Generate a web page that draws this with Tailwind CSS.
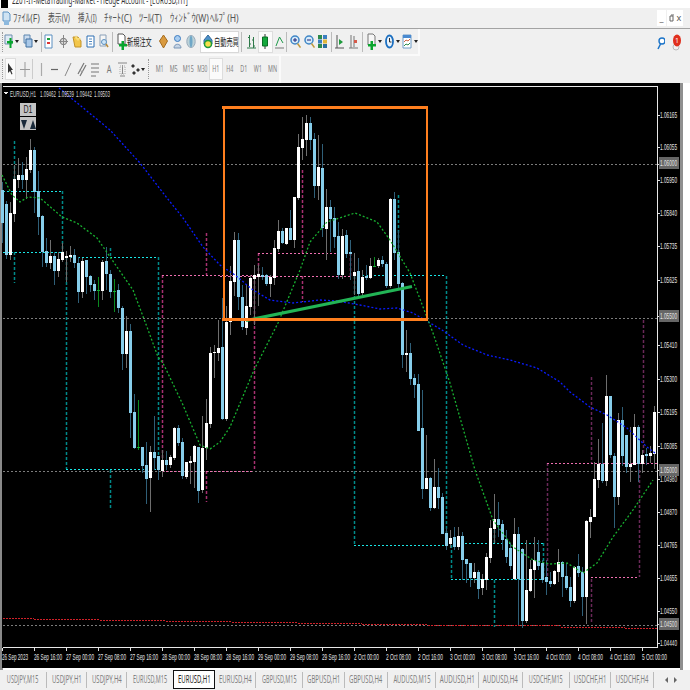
<!DOCTYPE html>
<html lang="ja">
<head>
<meta charset="utf-8">
<title>MetaTrader EURUSD,H1</title>
<script src="https://cdn.jsdelivr.net/npm/@tailwindcss/browser@4"></script>
</head>
<body class="bg-white">
<div class="w-[690px] h-[690px] overflow-hidden flex flex-col bg-[#f0f0f0] font-['Noto_Sans','Noto_Sans_CJK_JP',sans-serif] text-[#444]">

  <!-- title bar, cut off at the top -->
  <div class="h-[8px] bg-white overflow-hidden flex items-start gap-[4px] pl-[1px] shrink-0">
    <div class="w-[7px] h-[8px] bg-black shrink-0"></div>
    <div class="origin-left scale-x-[.62] text-[10px] leading-[10px] text-[#333] whitespace-nowrap -mt-[5px]">2201-IT-MetaTrading-Market - Hedge Account - [EURUSD,H1]</div>
  </div>

  <!-- menu -->
  <div class="h-[21px] border-b border-[#a3a3a3] flex items-center shrink-0 relative">
    <svg class="ml-[2px]" width="9" height="15" viewBox="0 0 9 15"><path d="M1 1h5l2 2v7H1z" fill="#cfe3f3" stroke="#5c93c4"/><path d="M2 10h5v4H2z" fill="#8db9de"/></svg>
    <div class="ml-[2px] flex text-[11px] leading-[20px] whitespace-nowrap text-[#555]">
      <div class="w-[35px]"><div class="origin-left scale-x-[.78] w-max">ﾌｧｲﾙ(F)</div></div>
      <div class="w-[30px]"><div class="origin-left scale-x-[.62] w-max">表示(V)</div></div>
      <div class="w-[26px]"><div class="origin-left scale-x-[.58] w-max">挿入(I)</div></div>
      <div class="w-[35px]"><div class="origin-left scale-x-[.78] w-max">ﾁｬｰﾄ(C)</div></div>
      <div class="w-[31px]"><div class="origin-left scale-x-[.78] w-max">ﾂｰﾙ(T)</div></div>
      <div class="w-[40px]"><div class="origin-left scale-x-[.78] w-max">ｳｨﾝﾄﾞｳ(W)</div></div>
      <div class="w-[30px]"><div class="origin-left scale-x-[.78] w-max">ﾍﾙﾌﾟ(H)</div></div>
    </div>
    <div class="ml-auto mr-[7px] flex h-[16px] items-stretch text-[#555] text-[9px] leading-[15px]">
      <div class="w-[9px] bg-white text-center mr-[1px]">_</div>
      <div class="w-[8px] bg-white flex items-center justify-center"><svg width="5" height="8" viewBox="0 0 5 8"><path d="M1 2h3v5H1zM2 1h3" fill="none" stroke="#666"/></svg></div>
      <div class="w-[8px] bg-white text-center">x</div>
    </div>
  </div>

  <!-- toolbar 1 -->
  <div class="h-[27px] flex shrink-0 relative">
    <div class="w-[420px] h-[27px] flex items-center border-b-2 border-r-2 border-[#fafafa]">
      <div class="ml-[2px] w-[1px] h-[20px] border-l border-dotted border-[#999]"></div>
      <div class="ml-[1px] w-[10px] flex justify-center"><svg width="9" height="15" viewBox="0 0 9 15"><path d="M1 1h7v9H1z" fill="#dfeaf5" stroke="#6f8fb0"/><path d="M3 7h2.500v-3h2v3H9v2.500H7.500V14h-2V9.500H3z" fill="#0aa52e"/></svg></div>
      <div class="w-[6px] flex justify-center"><div class="border-x-[2px] border-t-[3px] border-x-transparent border-t-[#222]"></div></div>
      <div class="ml-[3px] w-[10px] flex justify-center"><svg width="10" height="15" viewBox="0 0 10 15"><path d="M1 1h6v8H1z" fill="#cbdcef" stroke="#5d86b0"/><path d="M3 5h6v8H3z" fill="#a9c8e8" stroke="#3e6f9f"/></svg></div>
      <div class="w-[6px] flex justify-center"><div class="border-x-[2px] border-t-[3px] border-x-transparent border-t-[#222]"></div></div>
      <div class="ml-[2px] w-[1px] h-[20px] bg-[#bbb]"></div>
      <div class="w-[15px] flex justify-center"><svg width="9" height="15" viewBox="0 0 9 15"><path d="M1 1h7v13H1z" fill="#fff" stroke="#5a8fc0"/><path d="M3 4h3v2H3z" fill="#1b9e3c"/><path d="M3 8h3v2H3z" fill="#d33"/></svg></div>
      <div class="w-[14px] flex justify-center"><svg width="9" height="15" viewBox="0 0 9 15"><circle cx="4.500" cy="7.500" r="3.200" fill="#ddd" stroke="#777"/><path d="M4.500 1v13M0 7.500h9" stroke="#888"/></svg></div>
      <div class="w-[14px] flex justify-center"><svg width="10" height="15" viewBox="0 0 10 15"><path d="M1 3h5l3 4v6H3z" fill="#f3c64a" stroke="#c2932a"/><path d="M4 1l1.500 3H9L6 7 3 4z" fill="#f8dd78"/></svg></div>
      <div class="w-[14px] flex justify-center"><svg width="9" height="15" viewBox="0 0 9 15"><path d="M1 2h7v11H1z" fill="#fff" stroke="#2d6fb3"/><path d="M3 5h3M3 7.500h3M3 10h3" stroke="#4f87c0"/></svg></div>
      <div class="w-[14px] flex justify-center"><svg width="10" height="15" viewBox="0 0 10 15"><path d="M1 1h6v11H1z" fill="#f6f6f6" stroke="#8aa0b8"/><circle cx="5" cy="8" r="2.500" fill="#cfe6f7" stroke="#5a8fc0"/><path d="M7 10l2 3" stroke="#b98a3a" stroke-width="1.500"/></svg></div>
      <div class="ml-[1px] w-[1px] h-[20px] bg-[#bbb]"></div>
      <div class="ml-[3px] w-[11px] flex justify-center"><svg width="10" height="18" viewBox="0 0 10 18"><path d="M1 1h5l2 2v8H1z" fill="#fff" stroke="#555"/><path d="M2 11h2.500V8h2.500v3H10v2.500H7V17H4.500v-3.500H2z" fill="#0aa52e"/></svg></div>
      <div class="w-[30px] text-[10px] leading-[20px] text-[#222] whitespace-nowrap"><div class="origin-left scale-x-[.62] w-max">新規注文</div></div>
      <div class="w-[14px] flex justify-center"><svg width="9" height="15" viewBox="0 0 9 15"><path d="M4.500 1l4 6-4 7-4-7z" fill="#d99a3f" stroke="#a56c20"/></svg></div>
      <div class="w-[14px] flex justify-center"><svg width="9" height="15" viewBox="0 0 9 15"><circle cx="4.500" cy="4.500" r="3" fill="#a9cdf0" stroke="#3d7cc0"/><path d="M1 14c0-5 7-5 7 0z" fill="#c6d5e6" stroke="#7a95b5"/></svg></div>
      <div class="w-[14px] flex justify-center"><svg width="10" height="15" viewBox="0 0 10 15"><ellipse cx="5" cy="7.500" rx="4.200" ry="6" fill="#bcd2d8" stroke="#9ab"/><ellipse cx="5" cy="7.500" rx="1.500" ry="6" fill="#6fa7c7"/></svg></div>
      <div class="ml-[2px] w-[39px] h-[22px] bg-white border border-[#d8d8d8] flex items-center pl-[2px]">
        <svg class="shrink-0" width="10" height="15" viewBox="0 0 10 15"><path d="M1 6l4-5 4 5v4H1z" fill="#4e8fc9" stroke="#326a9a"/><circle cx="5" cy="10" r="3.500" fill="#f6e04a" stroke="#1c9a3a" stroke-width="1.500"/></svg>
        <div class="ml-[1px] w-[24px] text-[10px] leading-[20px] text-[#222] whitespace-nowrap"><div class="origin-left scale-x-[.62] w-max">自動売買</div></div>
      </div>
      <div class="ml-[2px] w-[1px] h-[20px] bg-[#bbb]"></div>
      <div class="ml-[2px] w-[14px] flex justify-center"><svg width="9" height="15" viewBox="0 0 9 15"><path d="M2.500 1v12M6.500 3v11M1 3.500h1.500M2.500 10H4M5 6h1.500M6.500 12H8M0 14h9" stroke="#2f7a4a" fill="none"/></svg></div>
      <div class="w-[15px] h-[22px] bg-[#fbfbfb] border border-[#ddd] flex items-center justify-center"><svg width="8" height="15" viewBox="0 0 8 15"><path d="M4 0v15" stroke="#333"/><path d="M1.500 3h5v9h-5z" fill="#14a83c" stroke="#0b6e26"/></svg></div>
      <div class="w-[13px] flex justify-center"><svg width="9" height="15" viewBox="0 0 9 15"><path d="M1 12l3.500-9L8 9" fill="none" stroke="#1e9a4a"/><path d="M0 14h9" stroke="#777"/></svg></div>
      <div class="ml-[1px] w-[1px] h-[20px] bg-[#bbb]"></div>
      <div class="ml-[1px] w-[14px] flex justify-center"><svg width="11" height="15" viewBox="0 0 11 15"><circle cx="5" cy="6" r="4" fill="#d6ebfa" stroke="#3f86c6" stroke-width="1.500"/><path d="M3 6h4M5 4v4" stroke="#227"/><path d="M7.500 9.500l3 4" stroke="#c29a3f" stroke-width="1.500"/></svg></div>
      <div class="w-[14px] flex justify-center"><svg width="11" height="15" viewBox="0 0 11 15"><circle cx="5" cy="6" r="4" fill="#d6ebfa" stroke="#3f86c6" stroke-width="1.500"/><path d="M3 6h4" stroke="#227"/><path d="M7.500 9.500l3 4" stroke="#c29a3f" stroke-width="1.500"/></svg></div>
      <div class="w-[14px] flex justify-center"><svg width="9" height="15" viewBox="0 0 9 15"><path d="M0 1h4v4H0zM0 10h4v4H0z" fill="#2c8a4a"/><path d="M5 1h4v4H5zM0 5.500h4v4H0z" fill="#3b7fc0"/><path d="M5 5.500h4v4H5z" fill="#e0b83a"/><path d="M5 10h4v4H5z" fill="#2c6f9f"/></svg></div>
      <div class="ml-[1px] w-[1px] h-[20px] bg-[#bbb]"></div>
      <div class="ml-[1px] w-[14px] flex justify-center"><svg width="9" height="15" viewBox="0 0 9 15"><path d="M2 1v13M0 14h9" stroke="#555"/><path d="M4 5v6l4-3z" fill="#1f9a3c"/></svg></div>
      <div class="w-[15px] flex justify-center"><svg width="9" height="15" viewBox="0 0 9 15"><path d="M2 1v13M5 2v11M0 14h9" stroke="#777"/><path d="M5 6h3v3H5z" fill="#d65a4a"/></svg></div>
      <div class="ml-[1px] w-[1px] h-[20px] bg-[#bbb]"></div>
      <div class="ml-[3px] w-[12px] flex justify-center"><svg width="9" height="18" viewBox="0 0 9 18"><path d="M1 1h5l2 2v9H1z" fill="#f6f6f6" stroke="#777"/><path d="M1 11h2.500V8H6v3h3v2.500H6V17H3.500v-3.500H1z" fill="#0aa52e"/></svg></div>
      <div class="w-[5px] flex justify-center"><div class="border-x-[2px] border-t-[3px] border-x-transparent border-t-[#222]"></div></div>
      <div class="ml-[1px] w-[12px] flex justify-center"><svg width="9" height="15" viewBox="0 0 9 15"><ellipse cx="4.500" cy="7.500" rx="3.500" ry="6" fill="#eaf3fb" stroke="#1c6fc0" stroke-width="1.800"/><path d="M4.500 4v4h2" stroke="#333" fill="none"/></svg></div>
      <div class="w-[5px] flex justify-center"><div class="border-x-[2px] border-t-[3px] border-x-transparent border-t-[#222]"></div></div>
      <div class="ml-[1px] w-[12px] flex justify-center"><svg width="10" height="15" viewBox="0 0 10 15"><path d="M1 1h8v13H1z" fill="#fff" stroke="#6f9cc8"/><path d="M1 1h8v3H1z" fill="#4a8ad0"/><path d="M2 8l2-2 2 1 2-2" stroke="#c64" fill="none"/><path d="M2 12l2-2 2 1 2-2" stroke="#2a8a4a" fill="none"/></svg></div>
      <div class="w-[5px] flex justify-center"><div class="border-x-[2px] border-t-[3px] border-x-transparent border-t-[#222]"></div></div>
    </div>
    <div class="ml-auto mr-[9px] flex items-center gap-[7px] h-[27px] relative">
      <svg width="8" height="14" viewBox="0 0 8 14"><circle cx="5" cy="5" r="3" fill="#fff" stroke="#1c74c8" stroke-width="1.400"/><path d="M3.500 8L1 13" stroke="#1c74c8" stroke-width="1.600"/></svg>
      <svg width="9" height="18" viewBox="0 0 9 18"><circle cx="4" cy="13" r="3" fill="#f2f2f2" stroke="#bbb"/><ellipse cx="5" cy="6.500" rx="4" ry="6" fill="#e0301e"/><text x="5" y="9" font-size="7" fill="#fff" text-anchor="middle">1</text></svg>
    </div>
  </div>

  <!-- toolbar 2 -->
  <div class="h-[27px] shrink-0 flex">
    <div class="w-[281px] h-[27px] flex items-center border-r-2 border-b border-[#fafafa]">
      <div class="ml-[2px] w-[1px] h-[20px] border-l border-dotted border-[#999]"></div>
      <div class="ml-[2px] w-[11px] h-[22px] bg-[#fbfbfb] border border-[#ddd] flex items-center justify-center"><svg width="7" height="14" viewBox="0 0 7 14"><path d="M1 1l5 7H4l1.500 4-1 .5L3 9 1 11z" fill="#333"/></svg></div>
      <div class="ml-[2px] w-[14px] flex justify-center"><svg width="10" height="15" viewBox="0 0 10 15"><path d="M5 0v15M0 7.500h10" stroke="#999"/></svg></div>
      <div class="w-[1px] h-[20px] bg-[#ccc] ml-[1px]"></div>
      <div class="ml-[1px] w-[14px] flex justify-center"><svg width="3" height="13" viewBox="0 0 3 13"><path d="M1.500 0v13" stroke="#aaa" stroke-width="1.200"/></svg></div>
      <div class="w-[14px] flex justify-center"><svg width="7" height="3" viewBox="0 0 7 3"><path d="M0 1.500h7" stroke="#666" stroke-width="1.200"/></svg></div>
      <div class="w-[14px] flex justify-center"><svg width="8" height="13" viewBox="0 0 8 13"><path d="M1 13L7 0" stroke="#888"/></svg></div>
      <div class="w-[14px] flex justify-center"><svg width="10" height="15" viewBox="0 0 10 15"><path d="M1 12L7 1M3 14L9 3" stroke="#777" stroke-width="1.200"/><path d="M2 8l4 2" stroke="#999"/></svg></div>
      <div class="w-[14px] flex justify-center"><svg width="9" height="15" viewBox="0 0 9 15"><path d="M0 2h8M0 6h8M0 10h8M0 14h5" stroke="#777" fill="none"/></svg></div>
      <div class="w-[14px] flex justify-center text-[10px] leading-[20px] text-[#777]"><span class="scale-x-[.75]">A</span></div>
      <div class="w-[14px] flex justify-center"><svg width="9" height="15" viewBox="0 0 9 15"><path d="M0 1h9M2 14h5M4.500 3v9" stroke="#888"/><path d="M2 4h5v8H2z" fill="none" stroke="#aaa" stroke-dasharray="1 1"/></svg></div>
      <div class="ml-[1px] w-[10px] flex justify-center"><svg width="9" height="13" viewBox="0 0 9 13"><path d="M2 1l2 2-2 2-2-2zM7 5l2 2-2 2-2-2zM3 8l2 2-2 2-2-2z" fill="#333"/></svg></div>
      <div class="w-[5px] flex justify-center"><div class="border-x-[2px] border-t-[3px] border-x-transparent border-t-[#222]"></div></div>
      <div class="ml-[3px] w-[1px] h-[20px] border-l border-dotted border-[#999]"></div>
      <div class="ml-[4px] flex items-center text-[9px] leading-[20px] text-[#808080]">
        <div class="w-[14px] flex justify-center"><span class="scale-x-[.6]">M1</span></div>
        <div class="w-[14px] flex justify-center"><span class="scale-x-[.6]">M5</span></div>
        <div class="w-[14px] flex justify-center"><span class="scale-x-[.6]">M15</span></div>
        <div class="w-[14px] flex justify-center"><span class="scale-x-[.55]">M30</span></div>
        <div class="w-[14px] h-[22px] flex justify-center bg-[#fbfbfb] border border-[#ddd]"><span class="scale-x-[.6]">H1</span></div>
        <div class="w-[14px] flex justify-center"><span class="scale-x-[.6]">H4</span></div>
        <div class="w-[14px] flex justify-center"><span class="scale-x-[.6]">D1</span></div>
        <div class="w-[14px] flex justify-center"><span class="scale-x-[.6]">W1</span></div>
        <div class="w-[14px] flex justify-center"><span class="scale-x-[.6]">MN</span></div>
      </div>
    </div>
  </div>

  <!-- chart -->
  <svg id="chart" class="block shrink-0 bg-white font-['Liberation_Sans',sans-serif]" width="690" height="587" viewBox="0 83 690 587" shape-rendering="crispEdges">
    <rect x="0" y="83" width="3" height="587" fill="#8a8a8a"/>
    <rect x="2" y="83" width="678" height="585" fill="#000"/>
    <rect x="680" y="83" width="3" height="587" fill="#8f8f8f"/>
    <path d="M2.500 86.500H657.500V647.500H2.500" fill="none" stroke="#e8e8e8"/>
    <g fill="none" stroke="#7c7c7c" stroke-dasharray="2 2">
      <path d="M3 164.500H657M3 318.500H657M3 471.500H657M3 625.500H657"/>
    </g>
    <g fill="none" stroke="#d02028" stroke-dasharray="2 1">
      <path d="M3 618.500H34M34 619.500H100M100 620.500H166M166 621.500H232M232 622.500H298M298 623.500H362M362 624.500H428M428 625.500H561M561 627.500H625M625 628.500H657"/>
    </g>
    <!-- cyan / teal D1 boxes -->
    <g fill="none" stroke="#008a8a" stroke-width="1.500" stroke-dasharray="3 2" shape-rendering="auto">
      <path d="M14.500 141V191M14.500 252V283M62.500 191V252M66.500 257V469M158.500 257V470M110.500 248V257M110.500 470V508M354.500 276V545M446.500 276V545M398.500 195V276M451.500 545V578M543.500 543V579M494.500 580V627M494.500 520V543"/>
    </g>
    <g fill="none" stroke="#19e6e6" stroke-dasharray="2 2">
      <path d="M3 191.500H62M3 252.500H62M66 257.500H158M66 469.500H158M354 275.500H446M354 545.500H446M465 543.500H543M451 579.500H543"/>
    </g>
    <!-- pink D1 boxes -->
    <g fill="none" stroke="#a83070" stroke-width="1.500" stroke-dasharray="3 2" shape-rendering="auto">
      <path d="M162.500 275V471M254.500 276V471M206.500 233V275M206.500 471V502M258.500 253V276M350.500 253V276M302.500 170V253M302.500 276V302"/>
    </g>
    <g fill="none" stroke="#6a2858" stroke-width="1.500" stroke-dasharray="3 2" shape-rendering="auto">
      <path d="M547.500 463V579M639.500 470V577M591.500 377V463M591.500 579V623M643.500 320V463"/>
    </g>
    <g fill="none" stroke="#ef6fb0" stroke-dasharray="2 2">
      <path d="M162 275.500H254M162 471.500H254M258 253.500H350M220 276.500H350M547 463.500H657M591 577.500H639"/>
    </g>
    <g id="candles"></g>
    <polyline fill="none" stroke="#0a1cff" stroke-width="1.300" stroke-dasharray="2 2" shape-rendering="auto" points="59,88 110,130 140,163 167,198 183,218 203,247 220,265 235,275 253,290 270,300 293,303 320,300 337,301 360,305 380,309 397,308 413,313 442,330 463,345 487,355 510,360 537,368 560,382 570,392 590,407 607,415 627,428 647,447 655,453"/>
    <polyline fill="none" stroke="#18b030" stroke-width="1.300" stroke-dasharray="2 2" shape-rendering="auto" points="2,175 7,185 12,195 20,202 28,197 40,198 62,217 77,223 97,238 117,267 133,290 147,327 158,357 163,363 183,405 200,445 210,449 220,442 230,427 254,370 278,323 300,270 310,242 327,222 355,213 377,222 390,240 410,273 433,333 450,383 475,470 493,520 513,547 533,560 550,564 567,563 583,573 597,563 613,537 633,510 653,480"/>
    <!-- drawn objects -->
    <path d="M246 320.500L412 286.500" stroke="#22b455" stroke-width="3" fill="none" shape-rendering="auto"/>
    <path d="M224 107.500H427V319.500H224Z" fill="none" stroke="#ff7f1e" stroke-width="2"/>
    <path d="M222 107.500H428M222 319.500H428" fill="none" stroke="#ff7f1e" stroke-width="3"/>
    <!-- info line -->
    <path d="M4 92h4l-2 3z" fill="#eee"/>
    <g fill="#d8d8d8" font-size="9">
      <text x="10" y="97" textLength="26" lengthAdjust="spacingAndGlyphs">EURUSD,H1</text>
      <text x="40" y="97" textLength="16" lengthAdjust="spacingAndGlyphs">1.09462</text>
      <text x="58" y="97" textLength="16" lengthAdjust="spacingAndGlyphs">1.09539</text>
      <text x="76" y="97" textLength="16" lengthAdjust="spacingAndGlyphs">1.09442</text>
      <text x="94" y="97" textLength="16" lengthAdjust="spacingAndGlyphs">1.09503</text>
    </g>
    <!-- D1 badge -->
    <rect x="20" y="103" width="16" height="13" fill="#c4c4c4"/>
    <rect x="20" y="117" width="16" height="13" fill="#c4c4c4"/>
    <text x="28" y="113" font-size="10" fill="#222" text-anchor="middle" textLength="9" lengthAdjust="spacingAndGlyphs">D1</text>
    <path d="M21 120h6l-3 9zM30 129l3-9 3 9z" fill="#1a2a3a" shape-rendering="auto"/>
    <!-- price axis -->
    <g stroke="#e0e0e0"><path d="M658 115.500h2M658 147.500h2M658 164.500h2M658 180.500h2M658 213.500h2M658 246.500h2M658 280.500h2M658 316.500h2M658 345.500h2M658 379.500h2M658 412.500h2M658 446.500h2M658 470.500h2M658 479.500h2M658 512.500h2M658 545.500h2M658 578.500h2M658 611.500h2M658 624.500h2M658 643.500h2"/></g>
    <rect x="659" y="157" width="20" height="12" fill="#666"/>
    <rect x="659" y="310" width="20" height="12" fill="#666"/>
    <rect x="659" y="464" width="20" height="12" fill="#666"/>
    <rect x="659" y="618" width="20" height="12" fill="#666"/>
    <g fill="#e4e4e4" font-size="9">
      <text x="660" y="118" textLength="17" lengthAdjust="spacingAndGlyphs">1.06165</text>
      <text x="660" y="150" textLength="17" lengthAdjust="spacingAndGlyphs">1.06055</text>
      <text x="660" y="166" textLength="17" lengthAdjust="spacingAndGlyphs">1.06000</text>
      <text x="660" y="183" textLength="17" lengthAdjust="spacingAndGlyphs">1.05950</text>
      <text x="660" y="216" textLength="17" lengthAdjust="spacingAndGlyphs">1.05840</text>
      <text x="660" y="249" textLength="17" lengthAdjust="spacingAndGlyphs">1.05735</text>
      <text x="660" y="283" textLength="17" lengthAdjust="spacingAndGlyphs">1.05625</text>
      <text x="660" y="319" textLength="17" lengthAdjust="spacingAndGlyphs">1.05500</text>
      <text x="660" y="348" textLength="17" lengthAdjust="spacingAndGlyphs">1.05410</text>
      <text x="660" y="382" textLength="17" lengthAdjust="spacingAndGlyphs">1.05300</text>
      <text x="660" y="415" textLength="17" lengthAdjust="spacingAndGlyphs">1.05195</text>
      <text x="660" y="449" textLength="17" lengthAdjust="spacingAndGlyphs">1.05085</text>
      <text x="660" y="482" textLength="17" lengthAdjust="spacingAndGlyphs">1.04980</text>
      <text x="660" y="473" textLength="17" lengthAdjust="spacingAndGlyphs">1.05000</text>
      <text x="660" y="515" textLength="17" lengthAdjust="spacingAndGlyphs">1.04870</text>
      <text x="660" y="548" textLength="17" lengthAdjust="spacingAndGlyphs">1.04765</text>
      <text x="660" y="581" textLength="17" lengthAdjust="spacingAndGlyphs">1.04655</text>
      <text x="660" y="614" textLength="17" lengthAdjust="spacingAndGlyphs">1.04550</text>
      <text x="660" y="627" textLength="17" lengthAdjust="spacingAndGlyphs">1.04500</text>
      <text x="660" y="646" textLength="17" lengthAdjust="spacingAndGlyphs">1.04440</text>
    </g>
    <!-- time axis -->
    <g stroke="#e0e0e0"><path d="M2.500 648v3M34.500 648v3M66.500 648v3M98.500 648v3M130.500 648v3M162.500 648v3M194.500 648v3M226.500 648v3M258.500 648v3M290.500 648v3M322.500 648v3M354.500 648v3M386.500 648v3M418.500 648v3M450.500 648v3M482.500 648v3M514.500 648v3M546.500 648v3M578.500 648v3M610.500 648v3M642.500 648v3"/></g>
    <g fill="#e4e4e4" font-size="9">
      <text x="2" y="660" textLength="26" lengthAdjust="spacingAndGlyphs">26 Sep 2023</text>
      <text x="34" y="660" textLength="28" lengthAdjust="spacingAndGlyphs">26 Sep 16:00</text>
      <text x="66" y="660" textLength="28" lengthAdjust="spacingAndGlyphs">27 Sep 00:00</text>
      <text x="98" y="660" textLength="28" lengthAdjust="spacingAndGlyphs">27 Sep 08:00</text>
      <text x="130" y="660" textLength="28" lengthAdjust="spacingAndGlyphs">27 Sep 16:00</text>
      <text x="162" y="660" textLength="28" lengthAdjust="spacingAndGlyphs">28 Sep 00:00</text>
      <text x="194" y="660" textLength="28" lengthAdjust="spacingAndGlyphs">28 Sep 08:00</text>
      <text x="226" y="660" textLength="28" lengthAdjust="spacingAndGlyphs">28 Sep 16:00</text>
      <text x="258" y="660" textLength="28" lengthAdjust="spacingAndGlyphs">29 Sep 00:00</text>
      <text x="290" y="660" textLength="28" lengthAdjust="spacingAndGlyphs">29 Sep 08:00</text>
      <text x="322" y="660" textLength="28" lengthAdjust="spacingAndGlyphs">29 Sep 16:00</text>
      <text x="354" y="660" textLength="25" lengthAdjust="spacingAndGlyphs">2 Oct 00:00</text>
      <text x="386" y="660" textLength="25" lengthAdjust="spacingAndGlyphs">2 Oct 08:00</text>
      <text x="418" y="660" textLength="25" lengthAdjust="spacingAndGlyphs">2 Oct 16:00</text>
      <text x="450" y="660" textLength="25" lengthAdjust="spacingAndGlyphs">3 Oct 00:00</text>
      <text x="482" y="660" textLength="25" lengthAdjust="spacingAndGlyphs">3 Oct 08:00</text>
      <text x="514" y="660" textLength="25" lengthAdjust="spacingAndGlyphs">3 Oct 16:00</text>
      <text x="546" y="660" textLength="25" lengthAdjust="spacingAndGlyphs">4 Oct 00:00</text>
      <text x="578" y="660" textLength="25" lengthAdjust="spacingAndGlyphs">4 Oct 08:00</text>
      <text x="610" y="660" textLength="25" lengthAdjust="spacingAndGlyphs">4 Oct 16:00</text>
      <text x="642" y="660" textLength="25" lengthAdjust="spacingAndGlyphs">5 Oct 00:00</text>
    </g>
  </svg>

  <!-- tabs -->
  <div class="h-[20px] flex shrink-0 text-[10px] leading-[19px] text-[#808080] whitespace-nowrap bg-[#f0f0f0] overflow-hidden">
    <div class="w-[47px] border-r border-[#bbb] my-[2px] flex justify-center"><span class="scale-x-[.55] -mt-[2px]">USDJPY,M15</span></div>
    <div class="w-[40px] border-r border-[#bbb] my-[2px] flex justify-center"><span class="scale-x-[.6] -mt-[2px]">USDJPY,H1</span></div>
    <div class="w-[40px] border-r border-[#bbb] my-[2px] flex justify-center"><span class="scale-x-[.6] -mt-[2px]">USDJPY,H4</span></div>
    <div class="w-[46px] my-[2px] flex justify-center"><span class="scale-x-[.55] -mt-[2px]">EURUSD,M15</span></div>
    <div class="w-[42px] h-[19px] bg-white border border-[#111] text-[#222] flex justify-center"><span class="scale-x-[.6] -mt-[1px]">EURUSD,H1</span></div>
    <div class="w-[41px] border-r border-[#bbb] my-[2px] flex justify-center"><span class="scale-x-[.6] -mt-[2px]">EURUSD,H4</span></div>
    <div class="w-[47px] border-r border-[#bbb] my-[2px] flex justify-center"><span class="scale-x-[.55] -mt-[2px]">GBPUSD,M15</span></div>
    <div class="w-[42px] border-r border-[#bbb] my-[2px] flex justify-center"><span class="scale-x-[.6] -mt-[2px]">GBPUSD,H1</span></div>
    <div class="w-[43px] border-r border-[#bbb] my-[2px] flex justify-center"><span class="scale-x-[.6] -mt-[2px]">GBPUSD,H4</span></div>
    <div class="w-[48px] border-r border-[#bbb] my-[2px] flex justify-center"><span class="scale-x-[.58] -mt-[2px]">AUDUSD,M15</span></div>
    <div class="w-[43px] border-r border-[#bbb] my-[2px] flex justify-center"><span class="scale-x-[.62] -mt-[2px]">AUDUSD,H1</span></div>
    <div class="w-[44px] border-r border-[#bbb] my-[2px] flex justify-center"><span class="scale-x-[.62] -mt-[2px]">AUDUSD,H4</span></div>
    <div class="w-[47px] border-r border-[#bbb] my-[2px] flex justify-center"><span class="scale-x-[.55] -mt-[2px]">USDCHF,M15</span></div>
    <div class="w-[41px] border-r border-[#bbb] my-[2px] flex justify-center"><span class="scale-x-[.6] -mt-[2px]">USDCHF,H1</span></div>
    <div class="w-[43px] border-r border-[#bbb] my-[2px] flex justify-center"><span class="scale-x-[.6] -mt-[2px]">USDCHF,H4</span></div>
    <div class="ml-[11px] flex items-center gap-[6px]">
      <div class="border-y-[3px] border-r-[3px] border-y-transparent border-r-[#666]"></div>
      <div class="border-y-[3px] border-l-[3px] border-y-transparent border-l-[#666]"></div>
    </div>
  </div>
</div>

<script>
// [type, bodyTop, bodyBottom, high, low] — b blue, w white, g green doji
var data = [
["b",190,223,182,243],["b",204,255,201,259],["w",213,255,202,260],["w",179,214,165,222],["w",175,180,158,188],["b",175,180,162,189],["w",169,180,157,199],["w",150,170,139,173],["b",150,192,147,213],["b",191,217,171,235],
["b",216,252,215,267],["b",251,263,238,267],["w",256,263,240,269],["b",256,271,252,285],["w",259,271,252,277],["w",252,260,243,262],["w",256,258,251,282],["w",255,257,246,262],["b",255,263,249,268],["b",263,292,257,303],
["w",261,292,258,298],["b",260,277,260,294],["b",276,285,275,292],["b",284,291,280,300],["g",290,291,277,307],["w",262,291,260,300],["b",261,274,247,290],["b",274,292,270,298],["g",291,292,279,312],["b",290,308,284,313],
["b",308,354,306,370],["w",331,354,316,368],["b",331,413,324,438],["b",412,448,394,449],["g",447,448,400,450],["b",447,466,447,473],["b",465,479,442,504],["w",452,478,446,512],["b",452,458,416,470],["b",456,470,456,480],
["w",460,471,450,477],["b",460,465,451,470],["w",457,465,455,468],["w",428,458,427,460],["b",428,443,425,446],["b",442,476,438,479],["w",462,477,462,479],["w",461,463,456,484],["w",446,462,445,488],["b",447,491,447,503],
["w",448,490,416,493],["w",423,448,399,460],["w",353,424,347,428],["w",352,353,345,378],["w",348,353,320,361],["b",347,419,298,420],["w",322,419,306,421],["w",281,322,266,335],["w",240,282,232,296],["b",240,297,233,310],
["b",297,327,285,330],["w",306,328,285,335],["w",278,307,275,315],["w",275,279,265,325],["w",274,277,265,306],["b",275,277,267,280],["b",275,284,274,286],["w",277,284,275,297],["w",248,278,240,285],["w",231,249,220,252],
["b",231,243,228,244],["w",228,244,228,245],["b",228,240,210,240],["w",197,240,197,248],["w",147,198,134,200],["w",139,148,117,160],["w",123,140,115,156],["b",123,140,117,150],["b",139,186,133,198],["w",167,186,135,200],
["b",168,228,144,237],["w",207,229,189,260],["b",207,219,200,252],["b",218,237,207,248],["b",236,275,222,279],["w",236,275,229,279],["b",235,254,230,258],["b",252,254,240,280],["w",272,276,253,295],["b",271,294,258,297],
["w",277,293,270,295],["b",276,278,265,280],["w",266,278,258,279],["g",266,267,257,267],["w",260,266,258,268],["b",260,264,256,267],["b",264,286,262,288],["w",199,286,198,288],["b",199,253,192,260],["b",252,284,231,290],
["b",283,355,282,368],["w",353,355,330,372],["b",353,379,343,385],["b",378,385,374,398],["b",384,431,374,431],["b",428,489,390,499],["w",478,489,435,489],["b",478,508,477,511],["w",487,508,459,509],["b",487,498,468,509],
["b",497,534,493,534],["b",533,546,528,550],["w",538,544,530,548],["b",537,547,527,550],["w",536,547,527,550],["b",536,560,532,580],["b",559,564,559,583],["b",563,578,563,587],["w",572,578,563,583],["b",572,589,570,599],
["w",579,588,574,595],["w",557,580,553,590],["w",528,558,520,563],["w",519,529,494,543],["b",519,525,502,537],["b",524,540,520,550],["b",539,557,530,563],["b",548,566,543,570],["w",534,579,518,580],["b",534,579,527,625],
["b",549,621,548,628],["w",590,621,540,623],["w",569,591,560,592],["w",560,570,537,598],["b",552,566,540,570],["b",563,580,560,583],["b",577,582,560,595],["b",581,584,572,587],["w",571,584,570,585],["w",562,572,549,582],
["b",562,577,561,597],["b",576,588,563,590],["b",587,601,577,607],["w",567,601,566,603],["b",566,573,554,577],["b",572,597,567,616],["w",521,597,520,624],["w",517,522,509,538],["w",479,517,462,517],["w",464,480,439,488],
["b",464,481,423,483],["w",396,481,375,486],["b",396,455,396,458],["b",456,497,453,528],["w",420,497,413,505],["b",420,456,407,466],["b",435,467,435,473],["w",464,467,427,482],["w",427,465,414,465],["b",427,464,425,482],
["w",455,464,450,473],["b",454,456,448,465],["w",453,456,446,463],["w",412,454,406,469]
];
var ns = "http://www.w3.org/2000/svg", g = document.getElementById("candles");
var body = {b:"#87ceeb", w:"#ffffff", g:"#10b030"}, wick = {b:"#2f5f78", w:"#6e6e6e", g:"#0a8a20"};
function rect(x, y, w, h, f){ var r = document.createElementNS(ns, "rect"); r.setAttribute("x", x); r.setAttribute("y", y); r.setAttribute("width", w); r.setAttribute("height", Math.max(h, 1)); r.setAttribute("fill", f); g.appendChild(r); }
data.forEach(function(c, i){
  var x = 1 + 4 * i;
  rect(x + 1, c[3], 1, c[4] - c[3], wick[c[0]]);
  rect(x, c[1], 3, c[2] - c[1], body[c[0]]);
});
</script>
</body>
</html>
